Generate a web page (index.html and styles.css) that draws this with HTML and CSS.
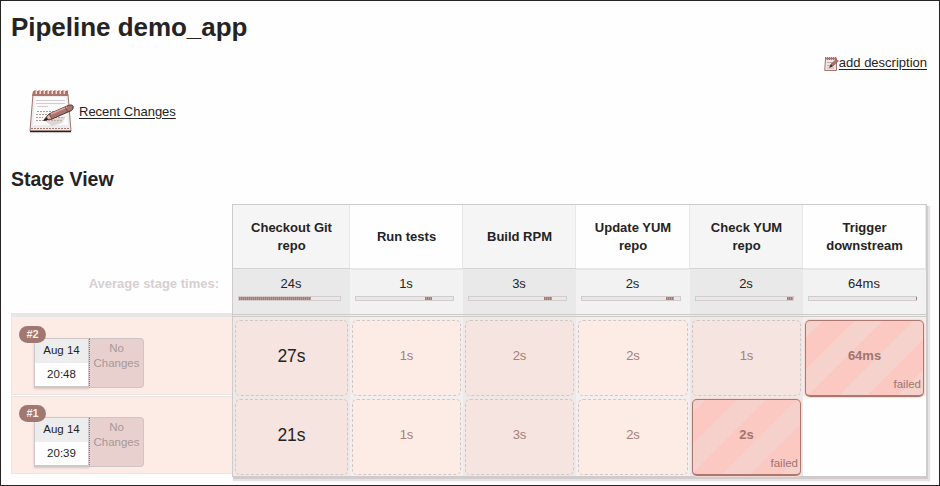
FILE: index.html
```html
<!DOCTYPE html>
<html lang="en">
<head>
<meta charset="utf-8">
<title>Pipeline demo_app</title>
<link rel="stylesheet" href="styles.css">
</head>
<body>
<svg class="defs" aria-hidden="true">
  <symbol id="notepad" viewBox="0 0 46 45">
    <path d="M4 5H39L42 42H1Z" fill="#ececec" stroke="#9d7771"/>
    <path d="M4 2H39V7H3Z" fill="#aa7770"/>
    <path d="M6 8H37L39 36H4Z" fill="#fafafa"/>
    <path d="M7 1V5M11 1V5M15 1V5M19 1V5M23 1V5M27 1V5M31 1V5M35 1V5" stroke="#ffd5ce" stroke-width="2"/>
    <path d="M6 1V5M10 1V5M14 1V5M18 1V5M22 1V5M26 1V5M30 1V5M34 1V5M38 1V5" stroke="#a2736c"/>
    <path d="M7 11.5H36M7 14.5H36M8 17.5H19" stroke="#d2cccc"/>
    <path d="M8 22.5H27M7 25.5H20M7 28.5H14M26 28.5H35M7 31.5H34" stroke="#b39894" stroke-dasharray="2 1"/>
    <path d="M2 39.5H41" stroke="#a87971" stroke-dasharray="2 1"/>
    <path d="M1 42.5H42" stroke="#252122" stroke-width="1.5"/>
    <path d="M16 32L37 27L33 34L23 37Z" fill="#c9bebc" opacity=".6"/>
    <path d="M15 31L20 25L38 17C42 15 45 16 44 19C44 21 42 22 39 23L23 30Z" fill="#aa746d" stroke="#4d3433"/>
    <path d="M22 25L38 18" stroke="#dca59d" stroke-width="1.5"/>
    <path d="M15 31L20 25L23 30Z" fill="#e7b8b0" stroke="#4d3433" stroke-width=".7"/>
    <path d="M14 32L18 28L19 31Z" fill="#221f20"/>
    <path d="M36 18L39 23" stroke="#704943"/>
  </symbol>
  <symbol id="note-small" viewBox="0 0 15 16">
    <path d="M1.5 2.5H12.5V14.5H.7Z" fill="#eee6e5" stroke="#a7736c"/>
    <path d="M1 2.5H13" stroke="#a7736c" stroke-width="3" stroke-dasharray="1.4 .6"/>
    <path d="M3 6.5H8M3 9.5H6M3 12H10" stroke="#c2aaa6"/>
    <path d="M5.5 11.5L7 8L12 3.5L14.5 5L9 10Z" fill="#a7736c" stroke="#805851" stroke-width=".6"/>
    <path d="M5.5 11.5L7 8.5L8.6 10Z" fill="#252122"/>
  </symbol>
</svg>
<main class="page">
  <h1>Pipeline demo_app</h1>
  <div class="describe"><svg class="icon-small"><use href="#note-small"/></svg><a>add description</a></div>
  <div class="recent"><svg class="icon-notepad"><use href="#notepad"/></svg><a>Recent Changes</a></div>
  <h2>Stage View</h2>
  <div class="board">
    <div class="runs">
      <div class="average">Average stage times:</div>
      <section class="run first">
        <div class="run-card"><div class="date"><span>Aug 14</span><span>20:48</span></div><div class="changes">No<br>Changes</div><b class="badge">#2</b></div>
      </section>
      <section class="run">
        <div class="run-card"><div class="date"><span>Aug 14</span><span>20:39</span></div><div class="changes">No<br>Changes</div><b class="badge">#1</b></div>
      </section>
    </div>
    <div class="stages">
      <div class="head odd">Checkout Git<br>repo</div>
      <div class="head">Run tests</div>
      <div class="head odd">Build RPM</div>
      <div class="head">Update YUM<br>repo</div>
      <div class="head odd">Check YUM<br>repo</div>
      <div class="head">Trigger<br>downstream</div>

      <div class="avg odd"><span>24s</span><div class="bar"><i style="margin-left:0;width:72px"></i></div></div>
      <div class="avg"><span>1s</span><div class="bar"><i style="margin-left:69px;width:7px"></i></div></div>
      <div class="avg odd"><span>3s</span><div class="bar"><i style="margin-left:75px;width:8px"></i></div></div>
      <div class="avg"><span>2s</span><div class="bar"><i style="margin-left:84px;width:8px"></i></div></div>
      <div class="avg odd"><span>2s</span><div class="bar"><i style="margin-left:91px;width:6px"></i></div></div>
      <div class="avg"><span>64ms</span><div class="bar"><i style="margin-left:107px;width:1px"></i></div></div>

      <div class="slot odd"><div class="cell slow">27s</div></div>
      <div class="slot"><div class="cell">1s</div></div>
      <div class="slot odd"><div class="cell">2s</div></div>
      <div class="slot"><div class="cell">2s</div></div>
      <div class="slot odd"><div class="cell">1s</div></div>
      <div class="slot"><div class="cell failed">64ms<span class="status">failed</span></div></div>

      <div class="slot odd"><div class="cell slow">21s</div></div>
      <div class="slot"><div class="cell">1s</div></div>
      <div class="slot odd"><div class="cell">3s</div></div>
      <div class="slot"><div class="cell">2s</div></div>
      <div class="slot odd"><div class="cell failed">2s<span class="status">failed</span></div></div>
      <div class="slot empty"></div>
    </div>
  </div>
</main>
</body>
</html>
```
FILE: styles.css
```css
* { box-sizing: border-box; }
body { margin: 0; background: #fefefe; color: #252324; font: 13px/18px "Liberation Sans", Arial, sans-serif; }
.defs { display: block; width: 0; height: 0; }
.page { height: 486px; border: 1px solid #252324; padding: 10px 12px 0 10px; overflow: hidden; }
h1 { margin: 0; font-size: 26px; line-height: 32px; letter-spacing: -.03px; }
a { text-decoration: underline; text-underline-offset: 2px; }
.describe { display: flex; justify-content: flex-end; height: 18px; margin-top: 11px; }
.icon-small { width: 15px; height: 16px; margin-top: 2px; }
.recent { display: flex; align-items: center; gap: 4px; height: 45px; margin: 17px 0 0 18px; }
.icon-notepad { width: 46px; height: 45px; }
h2 { margin: 32px 0 0; font-size: 19.5px; line-height: 26px; }

.board { display: flex; margin-top: 12px; }
.runs { width: 221px; padding-top: 71px; }
.average { height: 38px; padding: 0 13px 0 0; color: #d5d0d1; font-weight: bold; text-align: right; }
.run { height: 78px; margin-bottom: 1px; padding: 20px 0 0 22px; background: #fdebe5; border: 1px solid #ebe5e4; border-right: 0; }
.run.first { height: 82px; padding-top: 21px; border-top: 4px solid #e7e5e5; }
.run-card { position: relative; display: flex; width: 110px; height: 50px; }
.date { width: 55px; border: 1px solid #cfc8c9; border-bottom-width: 2px; background: #fefefe; box-shadow: 0 1px 2px #d3c5c4; font-size: 11.5px; text-align: center; }
.date span { display: block; height: 24px; line-height: 23px; }
.date span:first-child { background: #ededed; }
.changes { flex: 1; border: 1px solid #cdc6c6; border-left: 1px dotted #917777; border-radius: 0 4px 4px 0; background: #e7d0ce; color: #a99898; font-size: 11.5px; line-height: 15px; padding-top: 2px; text-align: center; }
.badge { position: absolute; left: -15px; top: -12px; width: 27px; height: 17px; border-radius: 9px; background: #a07771; color: #fdebe5; font-size: 11px; line-height: 17px; text-align: center; }

.stages { display: grid; grid-template-columns: 117px 113px 113px 114px 113px 123px; grid-template-rows: 63px 49px 79px 80px; width: 695px; height: 273px; border: 1px solid #cfcacb; box-shadow: 1px 2px 0 0 #d1cbcc, 2px 3px 1px 1px #e5e2e2; }
.head { display: flex; align-items: center; justify-content: center; padding-left: 1px; border-right: 1px solid #e9e8e8; background: #fefefe; font-weight: bold; text-align: center; }
.head.odd { background: #f5f5f5; }
.avg { display: flex; flex-direction: column; padding: 5px 9px 0 5px; border-top: 2px solid #e7e6e6; border-bottom: 3px double #cfcaca; background: #f2f2f2; }
.avg.odd { border-top: 1px solid #d7d2d3; padding-top: 6px; background: #e9e9e9; }
.avg span { padding-left: 3px; text-align: center; }
.bar { height: 5px; margin-top: 3px; border: 1px solid #d3cccc; background: #e9e7e7; }
.bar i { display: block; height: 3px; background: repeating-linear-gradient(90deg, #a17a73 0 1px, #b99893 1px 2px); }
.slot { padding: 3px 2px 0; background: #f4efef; }
.slot.odd { background: #eee8e7; }
.slot.empty { background: #fefefe; }
.cell { position: relative; display: flex; align-items: center; justify-content: center; height: 76px; padding-bottom: 4px; border: 1px dashed #cfc8c8; border-radius: 5px; background: #fdebe5; color: #a57f79; }
.odd .cell { background: #f5e4df; }
.cell.slow { color: #252324; font-size: 17.5px; }
.cell.failed { height: 77px; border: 1px solid #a97871; border-bottom-width: 2px; background: repeating-linear-gradient(135deg, #f6d2cc 0 12px, #fcc8c2 12px 34px, #f6d2cc 34px 42px); box-shadow: 0 0 1px 1px #f8d8d2; color: #9f756f; font-weight: bold; }
.odd .cell.failed { background: repeating-linear-gradient(135deg, #f6d0ca 0 9px, #fcc8c2 9px 31px, #f6d0ca 31px 42px); }
.status { position: absolute; right: 2px; bottom: 3px; font-size: 11.5px; font-weight: normal; line-height: 16px; }
```
